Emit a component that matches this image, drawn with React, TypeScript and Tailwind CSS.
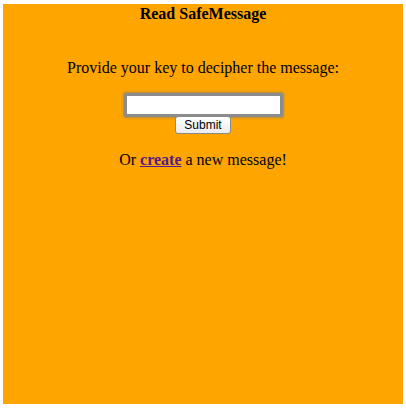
export default function App() {
  return (
    <div className="bg-white w-[406px] h-[408px] pt-[4px] pl-[3px]">
      <div className="w-[400px] h-[400px] bg-[#ffa500] text-black text-center font-['Liberation_Serif',serif] text-[16px]">
        <h3 className="font-bold text-[16px] leading-[19px]">Read SafeMessage</h3>
        <p className="mt-[35px] leading-[19px]">Provide your key to decipher the message:</p>
        <form className="mt-[16px] flex flex-col items-center" onSubmit={(e) => e.preventDefault()}>
          <input
            type="text"
            className="w-[159px] h-[24px] bg-white border-[3px] border-[#8c8c8c] rounded-[2px] shadow-[0_0_2px_1px_rgba(120,120,120,0.6)] outline-none"
          />
          <button
            type="submit"
            className="mt-[-1px] w-[56px] h-[18px] bg-gradient-to-b from-white to-[#ececec] border border-[#8a8a8a] rounded-[3px] text-[12px] leading-[16px] font-['Liberation_Sans',sans-serif]"
          >
            Submit
          </button>
        </form>
        <p className="mt-[16px] leading-[19px]">
          Or{" "}
          <a href="#" className="font-bold text-[#551a8b] underline">
            create
          </a>{" "}
          a new message!
        </p>
      </div>
    </div>
  );
}
